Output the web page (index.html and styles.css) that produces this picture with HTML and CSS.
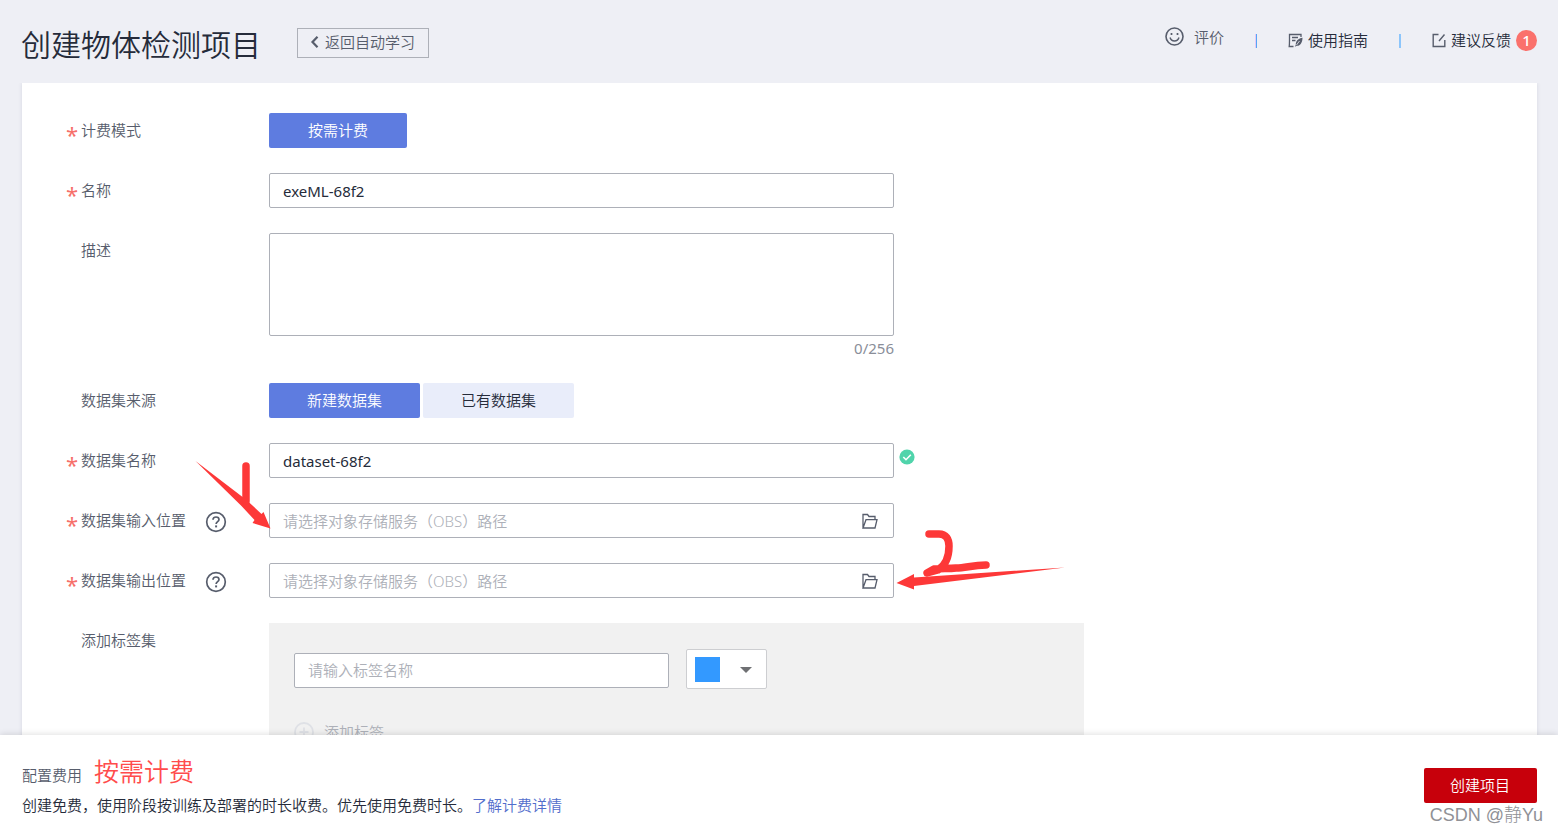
FILE: index.html
```html
<!DOCTYPE html>
<html lang="zh-CN">
<head>
<meta charset="utf-8">
<meta name="viewport" content="width=device-width, initial-scale=1">
<title>创建物体检测项目</title>
<link rel="stylesheet" href="styles.css">
</head>
<body>
<div class="page">
  <header class="header">
    <h1 class="title">创建物体检测项目</h1>
    <button class="back" type="button">
      <svg width="9" height="12" viewBox="0 0 9 12" aria-hidden="true"><path d="M7.500.8 2.500 6l5 5.200" fill="none" stroke="currentColor" stroke-width="2.200"/></svg>
      返回自动学习
    </button>
    <nav class="links">
      <a class="rate" href="#">
        <svg width="19" height="19" viewBox="0 0 19 19" fill="none" stroke="currentColor" stroke-width="1.600" aria-hidden="true"><circle cx="9.500" cy="9.500" r="8.500"/><path d="M5 10.500c.7 2.200 2.400 3.500 4.500 3.500s3.800-1.300 4.500-3.500" stroke-width="1.400"/><path d="M6.500 6v2M12.500 6v2" stroke-width="1.700"/></svg>
        评价
      </a>
      <span class="divider divider-first"></span>
      <a class="link" href="#">
        <svg width="15" height="15" viewBox="0 0 15 15" fill="none" stroke="currentColor" stroke-width="1.300" aria-hidden="true"><path d="M13 4V1.500H1.500v6c0 3-.1 4.500-.3 6h4.300M4 4.500h6M4 7.500h3.500"/><path d="M14.500 4.700c-4 .6-7 3.300-6.700 7l-1 2 2-.9c3.500.2 5.700-3.300 5.700-8.100z" fill="currentColor" stroke="none"/><path d="m8.500 12 3-4" stroke="#eeeff5" stroke-width=".8"/></svg>
        使用指南
      </a>
      <span class="divider"></span>
      <a class="link" href="#">
        <svg width="14" height="15" viewBox="0 0 14 15" fill="none" stroke="currentColor" stroke-width="1.400" aria-hidden="true"><path d="M6.500 1.500H1.200v12h11.600V7M7 8l5.500-6.500"/></svg>
        建议反馈<span class="badge">1</span>
      </a>
    </nav>
  </header>

  <main class="main">
    <form class="card" id="project">
      <div class="row">
        <span class="label"><span class="star">*</span>计费模式</span>
        <div class="field"><button class="choice choice-on choice-single" type="button">按需计费</button></div>
      </div>
      <div class="row">
        <label class="label" for="name"><span class="star">*</span>名称</label>
        <div class="field"><input class="input" id="name" type="text" value="exeML-68f2"></div>
      </div>
      <div class="row">
        <label class="label" for="desc"><span class="star"></span>描述</label>
        <div class="field field-stack">
          <textarea class="input area" id="desc"></textarea>
          <span class="count">0/256</span>
        </div>
      </div>
      <div class="row">
        <span class="label"><span class="star"></span>数据集来源</span>
        <div class="field choices">
          <button class="choice choice-on" type="button">新建数据集</button>
          <button class="choice" type="button">已有数据集</button>
        </div>
      </div>
      <div class="row">
        <label class="label" for="dataset"><span class="star">*</span>数据集名称</label>
        <div class="field"><input class="input" id="dataset" type="text" value="dataset-68f2"></div>
        <svg class="ok" width="16" height="16" viewBox="0 0 16 16" aria-hidden="true"><circle cx="8" cy="8" r="7.600" fill="#50d4ab"/><path d="m4.300 8 2.700 2.700 4.800-4.900" fill="none" stroke="#fff" stroke-width="1.600"/></svg>
      </div>
      <div class="row">
        <label class="label" for="input-path"><span class="star">*</span>数据集输入位置
          <svg class="help" width="22" height="22" viewBox="0 0 22 22" fill="none" stroke="currentColor" aria-hidden="true"><circle cx="11" cy="11" r="9.300" stroke-width="1.700"/><path d="M8 8.800C8 7 9.300 6 11 6s3 1 3 2.600c0 2-2.900 2.200-2.900 4.400" stroke-width="1.700"/><path d="M11.100 14.400v2" stroke-width="2"/></svg>
        </label>
        <div class="field">
          <input class="input" id="input-path" type="text" placeholder="请选择对象存储服务（OBS）路径">
          <button class="browse" type="button" aria-label="选择路径"><svg width="16" height="16" viewBox="0 0 16 16" fill="none" stroke="currentColor" stroke-width="1.300" aria-hidden="true"><path d="M1 15V1.500h4.500l1.500 2h6v3M1 15l3-8.300h11L13 15z"/></svg></button>
        </div>
      </div>
      <div class="row">
        <label class="label" for="output-path"><span class="star">*</span>数据集输出位置
          <svg class="help" width="22" height="22" viewBox="0 0 22 22" fill="none" stroke="currentColor" aria-hidden="true"><circle cx="11" cy="11" r="9.300" stroke-width="1.700"/><path d="M8 8.800C8 7 9.300 6 11 6s3 1 3 2.600c0 2-2.900 2.200-2.900 4.400" stroke-width="1.700"/><path d="M11.100 14.400v2" stroke-width="2"/></svg>
        </label>
        <div class="field">
          <input class="input" id="output-path" type="text" placeholder="请选择对象存储服务（OBS）路径">
          <button class="browse" type="button" aria-label="选择路径"><svg width="16" height="16" viewBox="0 0 16 16" fill="none" stroke="currentColor" stroke-width="1.300" aria-hidden="true"><path d="M1 15V1.500h4.500l1.500 2h6v3M1 15l3-8.300h11L13 15z"/></svg></button>
        </div>
      </div>
      <div class="row">
        <label class="label" for="tag"><span class="star"></span>添加标签集</label>
        <div class="tags">
          <div class="tag-row">
            <input class="input tag-name" id="tag" type="text" placeholder="请输入标签名称">
            <div class="color">
              <select class="color-select" aria-label="标签颜色"><option value="#3399ff" label=" "></option></select>
              <span class="swatch"></span>
              <svg class="caret" width="12" height="6" viewBox="0 0 12 6" aria-hidden="true"><path d="M0 0h12L6 6z" fill="#6f7073"/></svg>
            </div>
          </div>
          <button class="add" type="button">
            <svg width="20" height="20" viewBox="0 0 20 20" fill="none" stroke="#dfe1e6" stroke-width="1.800" aria-hidden="true"><circle cx="10" cy="10" r="9"/><path d="M10 5.500v9M5.500 10h9"/></svg>
            添加标签
          </button>
        </div>
      </div>

      <svg class="marks" width="880" height="140" viewBox="190 455 880 140" aria-hidden="true">
        <g fill="#fd3838">
          <path d="m195.500 461 51 39 15 14 2-2 7 16.500-18-5.500 2-3-13-14z"/>
          <path d="m1065 567.500-151 10V574l-17.500 9 17.500 6.500V586z"/>
        </g>
        <g fill="none" stroke="#fd3838" stroke-width="7.500" stroke-linecap="round" stroke-linejoin="round">
          <path d="M246 466v35"/>
          <path d="M929 534h10c7 0 10 5 10 12 0 10-3 19-11 24l-11 3 7-4c8-1 14 0 22-1 10 0 16-3 30-3"/>
        </g>
      </svg>
    </form>
  </main>

  <footer class="footer">
    <div class="cost">
      <div class="cost-line"><span class="cost-label">配置费用</span><strong class="price">按需计费</strong></div>
      <p class="note">创建免费，使用阶段按训练及部署的时长收费。优先使用免费时长。<a class="more" href="#">了解计费详情</a></p>
    </div>
    <button class="create" type="submit" form="project">创建项目</button>
    <span class="watermark">CSDN @静Yu</span>
  </footer>
</div>
</body>
</html>
```
FILE: styles.css
```css
* { box-sizing: border-box; }

body {
  margin: 0;
  background: #eeeff5;
  color: #252b3a;
  font: 350 15px/20px "Noto Sans", "Noto Sans CJK SC", sans-serif;
}

button, input, textarea, select { font: inherit; color: inherit; }
button { border: 0; padding: 0; background: none; }
a { color: inherit; text-decoration: none; }
svg { flex: none; }

.page { display: flex; flex-direction: column; height: 100vh; overflow: hidden; }

.header { display: flex; align-items: flex-start; flex: none; height: 83px; padding: 0 21px; }
.title { margin: 25px 36px 0 0; font-size: 30px; line-height: 40px; font-weight: 350; }
.back {
  display: flex; align-items: center; gap: 6px;
  height: 30px; margin-top: 28px; padding: 0 13px 2px 12px;
  border: 1px solid #adb0b8; color: #575d6c;
}
.links { display: flex; align-items: center; height: 20px; margin: 30px 0 0 auto; }
.rate { display: flex; align-items: center; gap: 10px; height: 20px; margin-bottom: 7px; color: #575d6c; }
.link { display: flex; align-items: center; gap: 5px; }
.link svg { color: #575d6c; }
.divider { width: 2px; height: 14px; margin: 2px 31px 0; background: #8cc5fb; }
.divider-first { border-left: 1px solid #e5c9f3; background: #55a5f5; }
.badge {
  width: 21px; height: 21px; border-radius: 50%;
  background: #fa716c; color: #fff; text-align: center; line-height: 21px; font-weight: 500;
}

.main { flex: 1; min-height: 0; overflow: hidden; padding: 0 21px 0 22px; }
.card {
  position: relative;
  display: flex; flex-direction: column; gap: 25px;
  min-height: 100%; padding: 30px 44px;
  background: #fff; box-shadow: 0 0 4px rgba(40, 50, 80, .12);
}
.row { display: flex; align-items: flex-start; }
.label { display: flex; flex: none; width: 203px; height: 35px; line-height: 35px; color: #575d6c; }
.star { flex: none; width: 15px; font-size: 22px; line-height: 42px; font-weight: 400; color: #f66f6a; }
.help { margin: 8px 0 0 19px; }
.field { position: relative; display: flex; width: 625px; }
.field-stack { flex-direction: column; }
.input {
  width: 100%; height: 35px; padding: 0 13px;
  border: 1px solid #adb0b8; border-radius: 2px; background: #fff; color: #252b3a; font-weight: 400;
}
.input::placeholder { color: #adb0b8; opacity: 1; font-weight: 350; }
.area { height: 103px; resize: none; }
.count { height: 22px; line-height: 25px; text-align: right; color: #8a8e99; font-weight: 400; }
.choices { gap: 3px; }
.choice { height: 35px; padding: 0 38px 2px; border-radius: 2px; background: #e9edfa; }
.choice-on { background: #5e7ce0; color: #fff; }
.choice-single { padding: 0 39px 2px; }
.ok { margin: 6px 0 0 5px; }
.browse { position: absolute; right: 16px; top: 10px; height: 16px; line-height: 0; color: #575d6c; }

.tags { width: 815px; min-height: 160px; padding: 26px 25px; background: #f1f1f1; }
.tag-row { display: flex; align-items: flex-end; gap: 17px; }
.tag-name { width: 375px; margin-bottom: 1px; padding-bottom: 2px; }
.color { position: relative; width: 81px; height: 40px; }
.color-select { appearance: none; width: 100%; height: 100%; border: 1px solid #cdced1; border-radius: 2px; background: #fff; }
.swatch { position: absolute; left: 9px; top: 8px; width: 25px; height: 25px; background: #3399ff; pointer-events: none; }
.caret { position: absolute; left: 54px; top: 18px; pointer-events: none; }
.add { display: flex; align-items: center; gap: 10px; margin-top: 33px; color: #adb0b8; }

.marks { position: absolute; left: 168px; top: 372px; pointer-events: none; }

.footer {
  position: relative;
  display: flex; align-items: flex-start; justify-content: space-between; flex: none;
  height: 99px; padding: 18px 21px 0 22px;
  background: #fff; box-shadow: 0 -1px 6px rgba(0, 0, 0, .12);
}
.cost-line { display: flex; align-items: baseline; gap: 12px; line-height: 36px; }
.cost-label { color: #575d6c; }
.price { font-size: 25px; font-weight: 350; color: #ff4c4c; }
.note { margin: 2px 0 0; }
.more { color: #526ecc; }
.create { height: 35px; margin-top: 15px; padding: 0 27px 1px 26px; border-radius: 2px; background: #c7000b; color: #fff; }
.watermark { position: absolute; right: 15px; bottom: 7px; font: 300 18px/24px "Liberation Sans", "Noto Sans CJK SC", sans-serif; color: #909196; }
```
